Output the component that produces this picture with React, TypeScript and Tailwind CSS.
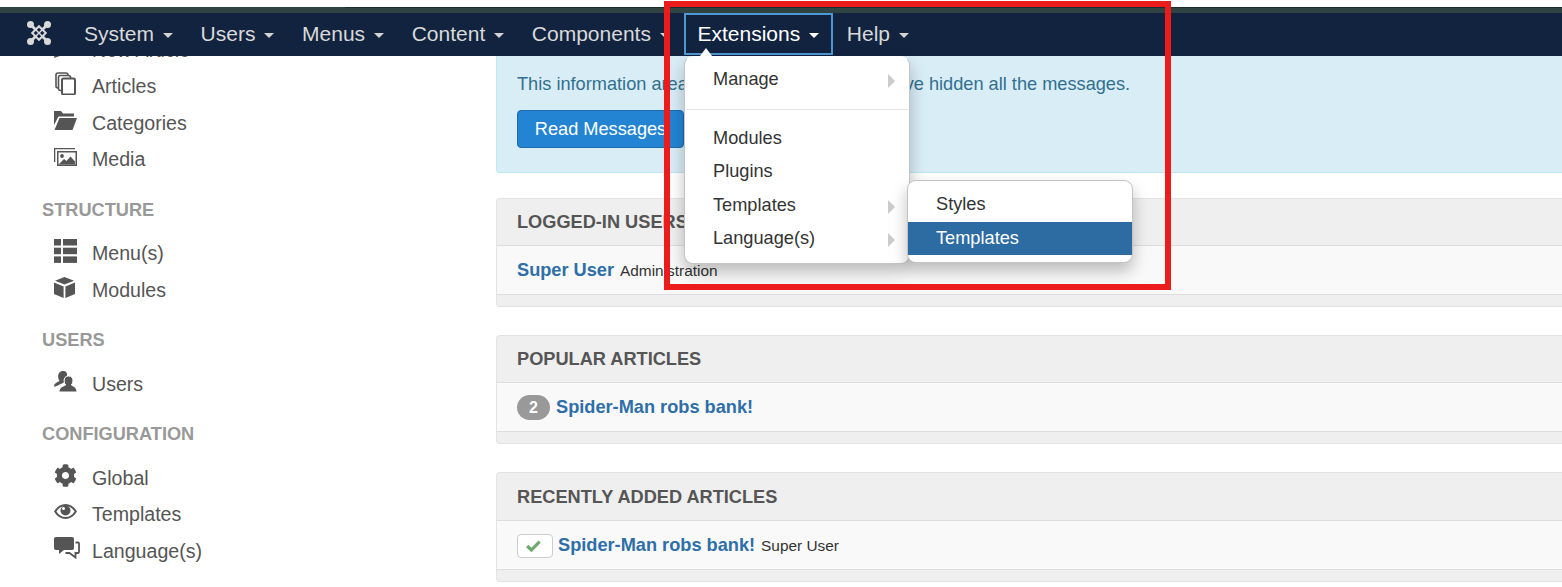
import React from "react";
import { FaCog } from "react-icons/fa";

const Caret = ({ white }: { white?: boolean }) => (
  <span className={"ml-[8.6px] mt-[4px] inline-block h-0 w-0 border-x-[5.5px] border-t-[5.5px] border-x-transparent " + (white ? "border-t-white" : "border-t-[#d4d4d4]")} />
);

const NavItem = ({ label, active }: { label: string; active?: boolean }) => (
  <div className={active
    ? "flex h-[42px] items-center border-2 border-[#4f97d3] px-[12px] pb-[2px] text-white"
    : "flex h-[42px] items-center px-[14px] pb-[2px] text-[#d9d9d9]"}>
    {label}
    <Caret white={active} />
  </div>
);

const Logo = () => (
  <svg width="26" height="26" viewBox="0 0 26 26" fill="none" stroke="#d9d9d9" strokeWidth="2.8" strokeLinecap="round">
    <circle cx="4.5" cy="4.5" r="3.5" fill="#d9d9d9" stroke="none" />
    <circle cx="21.5" cy="4.5" r="3.5" fill="#d9d9d9" stroke="none" />
    <circle cx="4.5" cy="21.5" r="3.5" fill="#d9d9d9" stroke="none" />
    <circle cx="21.5" cy="21.5" r="3.5" fill="#d9d9d9" stroke="none" />
    <path d="M5 5 L9.5 9.5 M21 5 L16.5 9.5 M5 21 L9.5 16.5 M21 21 L16.5 16.5" />
    <path d="M13 6.2 L19.8 13 L13 19.8 L6.2 13 Z" strokeWidth="2" />
    <path d="M9.8 9.8 L16.2 16.2 M16.2 9.8 L13.8 12.2 M12.2 13.8 L9.8 16.2" strokeWidth="1.5" />
  </svg>
);

const NewIcon = () => (
  <svg width="23" height="22" viewBox="0 0 23 22" fill="#555"><path d="M0 22 L1 15 L8 15 L9 19 Z" /></svg>
);
const CopyIcon = () => (
  <svg width="22" height="23" viewBox="0 0 22 23" fill="#fff" stroke="#555" strokeWidth="1.6">
    <rect x="2" y="1" width="12" height="15" rx="2" />
    <rect x="4.5" y="3.5" width="12" height="15" rx="2" />
    <rect x="8" y="6.5" width="13" height="16" rx="1.5" strokeWidth="2" />
  </svg>
);
const FolderIcon = () => (
  <svg width="23" height="19" viewBox="0 0 23 19" fill="#555">
    <path d="M0 0 H7 L9 2.5 H20 V5.5 H4.5 L0 14 Z" />
    <path d="M5.5 7 H23 L18.5 19 H0.5 Z" />
  </svg>
);
const MediaIcon = () => (
  <svg width="23" height="18" viewBox="0 0 23 18" fill="#555">
    <path d="M0 0 H21 V1.3 H1.3 V14 H0 Z" />
    <path fillRule="evenodd" d="M3 3 H23 V18 H3 Z M4.5 4.5 V16.5 H21.5 V4.5 Z" />
    <circle cx="8" cy="8" r="1.9" />
    <path d="M5 16 L10 11 L12.5 13 L16.5 8.5 L21 13.5 V16.5 H5 Z" />
  </svg>
);
const ListIcon = () => (
  <svg width="23" height="24" viewBox="0 0 23 24" fill="#555">
    <rect x="0" y="0" width="7" height="6.5" /><rect x="9" y="0" width="14" height="6.5" />
    <rect x="0" y="8.7" width="7" height="6.5" /><rect x="9" y="8.7" width="14" height="6.5" />
    <rect x="0" y="17.4" width="7" height="6.5" /><rect x="9" y="17.4" width="14" height="6.5" />
  </svg>
);
const CubeIcon = () => (
  <svg width="21" height="21" viewBox="0 0 21 21" fill="#555">
    <path d="M10.5 0 L20 3.8 L10.5 7.6 L1 3.8 Z" />
    <path d="M0 5.5 L9.6 9.4 V21 L0 17 Z" />
    <path d="M21 5.5 L11.4 9.4 V21 L21 17 Z" />
  </svg>
);
const UsersIcon = () => (
  <svg width="23" height="21" viewBox="0 0 23 21" fill="#555">
    <path d="M9 0 C12 0 13.5 2 13 4.8 C10.5 6 9.5 9 10.5 11 C8 12.5 4.5 14 1.5 15.5 H0 C0 12.5 3 11.5 5.5 10 C4.5 8.5 4 6.5 4.2 4.5 C4.4 1.8 6.3 0 9 0 Z" />
    <path d="M14.5 5 C17.5 5 19.2 7 19 10 C18.9 11.8 18.2 13 17.4 14 C19.5 15.5 23 16 23 21 H5 C5 16 9 15.5 11.6 14 C10.8 13 10.2 11.8 10.1 10 C9.9 7 11.7 5 14.5 5 Z" stroke="#fff" strokeWidth="1" />
  </svg>
);
const EyeIcon = () => (
  <svg width="23" height="15" viewBox="0 0 23 15" fill="none">
    <path d="M1.2 7.5 C4 3 7.5 1 11.5 1 C15.5 1 19 3 21.8 7.5 C19 12 15.5 14 11.5 14 C7.5 14 4 12 1.2 7.5 Z" stroke="#555" strokeWidth="2" />
    <circle cx="11.5" cy="6.5" r="5" fill="#555" />
    <circle cx="9.5" cy="4.6" r="1.5" fill="#fff" />
  </svg>
);
const LangIcon = () => (
  <svg width="26" height="22" viewBox="0 0 26 22" fill="none">
    <path d="M2 0 H18 C19.2 0 20 .8 20 2 V11 C20 12.2 19.2 13 18 13 H10 L5 17 V13 H2 C.8 13 0 12.2 0 11 V2 C0 .8 .8 0 2 0 Z" fill="#555" />
    <path d="M21.5 5.5 H24 C24.6 5.5 25 5.9 25 6.5 V15 C25 15.6 24.6 16 24 16 H21.5 V20.5 L15.5 16 H11.5" stroke="#555" strokeWidth="1.8" />
  </svg>
);

const Row = ({ icon, label }: { icon: React.ReactNode; label: string }) => (
  <div className="flex h-[36.5px] items-center pl-[54px]">
    <span className="flex h-[24px] w-[38px] -translate-y-[3px] items-center">{icon}</span>
    <span>{label}</span>
  </div>
);

const SectionHead = ({ label }: { label: string }) => (
  <div className="mb-[12px] mt-[18.5px] pl-[42px] text-[18.2px] font-bold leading-[27px] text-[#999]">{label}</div>
);

const Panel = ({ title, tall, children }: { title: string; tall?: boolean; children: React.ReactNode }) => (
  <div className="rounded-l-[4px] border border-r-0 border-[#e3e3e3] bg-[#efefef]">
    <div className={(tall ? "h-[48px] leading-[48px]" : "h-[47px] leading-[46px]") + " border-b border-[#ddd] pl-[20px] text-[18.2px] font-bold text-[#555]"}>{title}</div>
    <div className={(tall ? "leading-[46px]" : "leading-[47px]") + " h-[49px] border-b border-[#ddd] bg-[#f9f9f9] pl-[20px]"}>{children}</div>
    <div className="h-[11px]" />
  </div>
);

const LinkText = ({ children }: { children: React.ReactNode }) => (
  <a className="text-[18.2px] font-bold text-[#2e6fa8]">{children}</a>
);
const Small = ({ children }: { children: React.ReactNode }) => (
  <span className="ml-[6px] text-[15.4px] text-[#333]">{children}</span>
);

const Arrow = () => (
  <span className="mt-[3px] h-0 w-0 border-y-[7px] border-l-[7px] border-y-transparent border-l-[#ccc]" />
);
const MenuRow = ({ label, arrow }: { label: string; arrow?: boolean }) => (
  <div className="flex h-[33.4px] items-center justify-between pl-[28px] pr-[14px]">
    <span>{label}</span>
    {arrow && <Arrow />}
  </div>
);

export default function App() {
  return (
    <div className="relative h-[587px] w-[1562px] overflow-hidden bg-white font-['Liberation_Sans',Arial,sans-serif] text-[19.6px] leading-[27px] text-[#555]">
      <div className="relative z-10">
        <div className="h-[7px] bg-white" />
        <div className="flex h-[6px] bg-[#2f4442]">
          <div className="w-[345px]" />
          <div className="flex-1 border-t border-[#1c2c2c]" />
        </div>
        <nav className="flex h-[43px] items-start bg-[#12233f] text-[21px]">
          <div className="flex h-[42px] w-[70px] items-center pb-[2px] pl-[26px]"><Logo /></div>
          <NavItem label="System" />
          <NavItem label="Users" />
          <NavItem label="Menus" />
          <NavItem label="Content" />
          <NavItem label="Components" />
          <NavItem label="Extensions" active />
          <NavItem label="Help" />
        </nav>
      </div>

      <div className="flex">
        <aside className="-mt-[24px] w-[496px] shrink-0">
          <Row icon={<NewIcon />} label="New Article" />
          <Row icon={<CopyIcon />} label="Articles" />
          <Row icon={<FolderIcon />} label="Categories" />
          <Row icon={<MediaIcon />} label="Media" />
          <SectionHead label="STRUCTURE" />
          <Row icon={<ListIcon />} label="Menu(s)" />
          <Row icon={<CubeIcon />} label="Modules" />
          <SectionHead label="USERS" />
          <Row icon={<UsersIcon />} label="Users" />
          <SectionHead label="CONFIGURATION" />
          <Row icon={<FaCog size={23} color="#555" />} label="Global" />
          <Row icon={<EyeIcon />} label="Templates" />
          <Row icon={<LangIcon />} label="Language(s)" />
        </aside>

        <main className="-mt-[10px] flex-1">
          <div className="mb-[25px] rounded-l-[4px] border border-r-0 border-[#bce8f1] bg-[#d9edf7] pb-[24px] pl-[20px] pt-[23.5px] text-[18.2px] text-[#31708f]">
            <p>This information area won't appear when you have hidden all the messages.</p>
            <button className="mt-[12.5px] h-[38px] w-[167px] rounded-[4px] border border-[#1d6cb0] bg-[#2384d3] text-white">Read Messages</button>
          </div>
          <div className="flex flex-col gap-[28px]">
            <Panel title="LOGGED-IN USERS">
              <LinkText>Super User</LinkText>
              <Small>Administration</Small>
            </Panel>
            <Panel title="POPULAR ARTICLES">
              <span className="mr-[6px] inline-block h-[25px] w-[33px] rounded-full bg-[#999] text-center align-middle text-[16px] font-bold leading-[25px] text-white">2</span>
              <LinkText>Spider-Man robs bank!</LinkText>
            </Panel>
            <Panel title="RECENTLY ADDED ARTICLES" tall>
              <span className="mr-[5px] inline-flex h-[24px] w-[36px] items-center justify-center rounded-[4px] border border-[#ccc] bg-white pr-[3px] align-middle">
                <svg width="15" height="12" viewBox="0 0 15 12" fill="none" stroke="#6fa96f" strokeWidth="3.2"><path d="M1.2 6 L5.4 10 L13.6 1.6" /></svg>
              </span>
              <LinkText>Spider-Man robs bank!</LinkText>
              <Small>Super User</Small>
            </Panel>
          </div>
        </main>
      </div>

      <div className="absolute left-[700px] top-[48px] z-30 h-0 w-0 border-x-[6.5px] border-b-[8px] border-x-transparent border-b-white" />

      <div className="absolute left-[684px] top-[56px] z-20 h-[208px] w-[226px] rounded-[9px] border border-[#c4c4c4] border-t-transparent bg-white pt-[6px] text-[18.2px] text-[#333] shadow-[0_8px_16px_rgba(0,0,0,0.25)]">
        <MenuRow label="Manage" arrow />
        <div className="mx-px mb-[12px] mt-[12.5px] h-px bg-[#e5e5e5]" />
        <MenuRow label="Modules" />
        <MenuRow label="Plugins" />
        <MenuRow label="Templates" arrow />
        <MenuRow label="Language(s)" arrow />
      </div>

      <div className="absolute left-[907px] top-[180px] z-20 h-[83px] w-[226px] rounded-[9px] border border-[#c4c4c4] bg-white pt-[6px] text-[18.2px] text-[#333] shadow-[0_8px_16px_rgba(0,0,0,0.25)]">
        <div className="flex h-[35px] items-center pl-[28px]">Styles</div>
        <div className="flex h-[33px] items-center bg-[#2d6ca2] pl-[28px] text-white">Templates</div>
      </div>

      <div className="pointer-events-none absolute left-[664px] top-[1px] z-40 h-[289px] w-[507px] border-[6px] border-[#ec1c1c]" />
    </div>
  );
}
